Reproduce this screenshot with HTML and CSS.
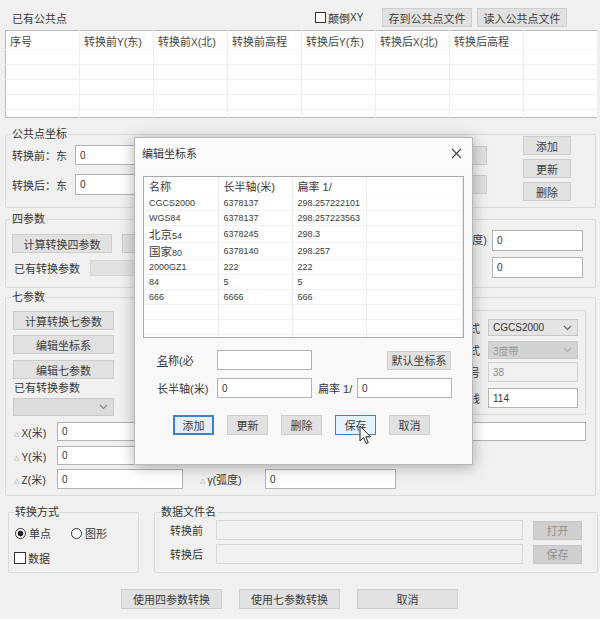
FILE: index.html
```html
<!DOCTYPE html>
<html lang="zh-CN">
<head>
  <meta charset="UTF-8">
  <title>坐标转换</title>
  <link rel="stylesheet" href="styles.css">
</head>
<body>
<div class="window">

  <div class="top-bar">
    <span class="top-title">已有公共点</span>
    <label class="check swap"><span class="box"></span>颠倒<span class="lat">XY</span></label>
    <button class="btn file-btn">存到公共点文件</button>
    <button class="btn file-btn">读入公共点文件</button>
  </div>

  <table class="points">
    <colgroup>
      <col class="pcol"><col class="pcol"><col class="pcol"><col class="pcol">
      <col class="pcol"><col class="pcol"><col class="pcol"><col>
    </colgroup>
    <tr class="head">
      <td>序号</td><td>转换前<span class="lat">Y</span>(东)</td><td>转换前<span class="lat">X</span>(北)</td><td>转换前高程</td>
      <td>转换后<span class="lat">Y</span>(东)</td><td>转换后<span class="lat">X</span>(北)</td><td>转换后高程</td><td></td>
    </tr>
    <tr><td></td><td></td><td></td><td></td><td></td><td></td><td></td><td></td></tr>
    <tr><td></td><td></td><td></td><td></td><td></td><td></td><td></td><td></td></tr>
    <tr><td></td><td></td><td></td><td></td><td></td><td></td><td></td><td></td></tr>
    <tr><td></td><td></td><td></td><td></td><td></td><td></td><td></td><td></td></tr>
    <tr class="tail"><td></td><td></td><td></td><td></td><td></td><td></td><td></td><td></td></tr>
  </table>

  <!-- 公共点坐标 -->
  <div class="group common-group">
    <span class="legend">公共点坐标</span>
    <div class="common-body">
      <div class="coord-rows">
        <div class="coord-row">
          <span class="coord-label">转换前：东</span>
          <input class="field coord-input" value="0">
          <button class="btn side-btn"></button>
        </div>
        <div class="coord-row">
          <span class="coord-label">转换后：东</span>
          <input class="field coord-input" value="0">
          <button class="btn side-btn"></button>
        </div>
      </div>
      <div class="common-btns">
        <button class="btn small-btn">添加</button>
        <button class="btn small-btn">更新</button>
        <button class="btn small-btn">删除</button>
      </div>
    </div>
  </div>

  <!-- 四参数 -->
  <div class="group four-group">
    <span class="legend">四参数</span>
    <div class="four-row">
      <button class="btn calc-btn">计算转换四参数</button>
      <button class="btn calc-btn next"></button>
      <span class="param-label">度)</span>
      <input class="field short-input top" value="0">
    </div>
    <div class="four-row second">
      <span class="have-label">已有转换参数</span>
      <span class="blank-box"></span>
      <input class="field short-input" value="0">
    </div>
  </div>

  <!-- 七参数 -->
  <div class="group seven-group">
    <span class="legend">七参数</span>
    <div class="seven-top">
      <div class="seven-tools">
        <button class="btn tool-btn">计算转换七参数</button>
        <button class="btn tool-btn">编辑坐标系</button>
        <button class="btn tool-btn">编辑七参数</button>
        <div class="tools-label">已有转换参数</div>
        <div class="combo off wide">
          <span></span>
          <svg class="chev" width="9" height="6" viewBox="0 0 9 6"><polyline points="1,1 4.5,4.5 8,1" fill="none" stroke="#888" stroke-width="1.1"/></svg>
        </div>
      </div>
      <div class="proj-box">
        <div class="proj-row h17">
          <span class="proj-label">格式</span>
          <div class="combo">
            <span class="lat">CGCS2000</span>
            <svg class="chev" width="9" height="6" viewBox="0 0 9 6"><polyline points="1,1 4.5,4.5 8,1" fill="none" stroke="#666" stroke-width="1.1"/></svg>
          </div>
        </div>
        <div class="proj-row h18">
          <span class="proj-label">方式</span>
          <div class="combo off">
            <span>3度带</span>
            <svg class="chev" width="9" height="6" viewBox="0 0 9 6"><polyline points="1,1 4.5,4.5 8,1" fill="none" stroke="#aaa" stroke-width="1.1"/></svg>
          </div>
        </div>
        <div class="proj-row h20">
          <span class="proj-label">带号</span>
          <input class="field proj-input off" value="38" readonly>
        </div>
        <div class="proj-row h20 last">
          <span class="proj-label">子午线</span>
          <input class="field proj-input" value="114">
        </div>
      </div>
    </div>

    <div class="param-rows">
      <div class="param-row">
        <span class="delta-label"><span class="tri">△</span><span class="lat">X</span>(米)</span>
        <input class="field param-input" value="0">
        <span class="angle-label"></span>
        <input class="field angle-input" value="">
        <input class="field scale-input" value="">
      </div>
      <div class="param-row">
        <span class="delta-label"><span class="tri">△</span><span class="lat">Y</span>(米)</span>
        <input class="field param-input" value="0">
        <span class="angle-label"><span class="tri">△</span><span class="lat">β</span>(弧度)</span>
        <input class="field angle-input" value="0">
      </div>
      <div class="param-row tall">
        <span class="delta-label"><span class="tri">△</span><span class="lat">Z</span>(米)</span>
        <input class="field param-input" value="0">
        <span class="angle-label"><span class="tri">△</span><span class="lat">γ</span>(弧度)</span>
        <input class="field angle-input" value="0">
      </div>
    </div>
  </div>

  <div class="bottom-groups">
    <div class="group mode-group">
      <span class="legend">转换方式</span>
      <div class="radio-row">
        <label class="radio"><span class="dot on"></span>单点</label>
        <label class="radio second"><span class="dot"></span>图形</label>
      </div>
      <div class="check-row">
        <label class="check"><span class="box"></span>数据</label>
      </div>
    </div>

    <div class="group file-group">
      <span class="legend">数据文件名</span>
      <div class="file-row">
        <span class="file-label">转换前</span>
        <span class="file-box"></span>
        <button class="btn file-act" disabled>打开</button>
      </div>
      <div class="file-row next">
        <span class="file-label">转换后</span>
        <span class="file-box"></span>
        <button class="btn file-act" disabled>保存</button>
      </div>
    </div>
  </div>

  <div class="actions">
    <button class="btn action-btn">使用四参数转换</button>
    <button class="btn action-btn">使用七参数转换</button>
    <button class="btn action-btn">取消</button>
  </div>

  <!-- 编辑坐标系 dialog -->
  <div class="dialog">
    <div class="dialog-title">
      <span>编辑坐标系</span>
      <svg class="close" width="11" height="11" viewBox="0 0 11 11"><path d="M1 1 L10 10 M10 1 L1 10" stroke="#444" stroke-width="1.1"/></svg>
    </div>

    <div class="ellipsoid-list">
      <table class="ellipsoids">
        <colgroup><col class="ecol"><col class="ecol"><col class="ecol"><col></colgroup>
        <tr class="head"><td>名称</td><td>长半轴(米)</td><td>扁率 1/</td><td></td></tr>
        <tr><td>CGCS2000</td><td>6378137</td><td>298.257222101</td><td></td></tr>
        <tr><td>WGS84</td><td>6378137</td><td>298.257223563</td><td></td></tr>
        <tr><td><span class="cjk">北京</span>54</td><td>6378245</td><td>298.3</td><td></td></tr>
        <tr><td><span class="cjk">国家</span>80</td><td>6378140</td><td>298.257</td><td></td></tr>
        <tr><td>2000GZ1</td><td>222</td><td>222</td><td></td></tr>
        <tr><td>84</td><td>5</td><td>5</td><td></td></tr>
        <tr><td>666</td><td>6666</td><td>666</td><td></td></tr>
        <tr><td></td><td></td><td></td><td></td></tr>
        <tr><td></td><td></td><td></td><td></td></tr>
        <tr><td></td><td></td><td></td><td></td></tr>
      </table>
    </div>

    <div class="dlg-row first">
      <span class="dlg-label"><u>名</u>称(必</span>
      <input class="field dlg-input" value="">
      <button class="btn default-btn">默认坐标系</button>
    </div>
    <div class="dlg-row">
      <span class="dlg-label">长半轴(米)</span>
      <input class="field dlg-input" value="0">
      <span class="flat-label">扁率 1/</span>
      <input class="field dlg-input" value="0">
    </div>
    <div class="dlg-btns">
      <button class="btn dlg-btn focus">添加</button>
      <button class="btn dlg-btn">更新</button>
      <button class="btn dlg-btn">删除</button>
      <button class="btn dlg-btn hover">保存</button>
      <button class="btn dlg-btn">取消</button>
    </div>
  </div>

  <svg class="cursor" width="13" height="20" viewBox="0 0 13 20">
    <path d="M1 1 L1 16 L4.5 12.5 L7 18.5 L9.2 17.6 L6.8 11.8 L11.5 11.8 Z" fill="#fff" stroke="#222" stroke-width="1" stroke-linejoin="round"/>
  </svg>
</div>
</body>
</html>
```

FILE: styles.css
```css
* {
  box-sizing: border-box;
}

html, body {
  margin: 0;
  padding: 0;
}

body {
  width: 600px;
  height: 619px;
  overflow: hidden;
  background: #f0f0f0;
  font-family: "Liberation Sans", "Noto Sans CJK SC", sans-serif;
  font-size: 11px;
  color: #363636;
}

.window {
  position: relative;
  height: 617px;
  border-bottom: 2px solid #5c5c5c;
}

.lat {
  font-size: 10px;
}

/* buttons and fields */
.btn {
  font: inherit;
  color: #3c3c3c;
  background: #e1e1e1;
  border: 1px solid #cdcdcd;
  padding: 0;
  height: 19px;
  display: flex;
  align-items: center;
  justify-content: center;
}

.btn[disabled] {
  background: #cfcfcf;
  border-color: #c6c6c6;
  color: #8f8f8f;
}

.field {
  font-family: "Liberation Sans", sans-serif;
  font-size: 10px;
  color: #333;
  background: #fff;
  border: 1px solid #b3b3b3;
  padding: 0 0 0 4px;
  margin: 0;
  height: 20px;
  outline: none;
}

.field.off {
  background: #f0f0f0;
  border-color: #d2d2d2;
  color: #8a8a8a;
}

.check {
  display: flex;
  align-items: center;
}

.check .box {
  width: 12px;
  height: 12px;
  border: 1px solid #333;
  background: #fff;
  margin-right: 2px;
}

/* top list */
.top-bar {
  display: flex;
  align-items: center;
  height: 19px;
  margin-top: 8px;
  padding-left: 12px;
}

.top-title {
  width: 303px;
}

.check.swap {
  width: 67px;
}

.check.swap .box {
  width: 11px;
  height: 11px;
}

.file-btn {
  width: 90px;
}

.file-btn + .file-btn {
  margin-left: 5px;
}

.points {
  margin: 3px 0 0 5px;
  width: 593px;
  height: 86px;
  border-collapse: collapse;
  table-layout: fixed;
  background: #fff;
  border: 1px solid #b9b9b9;
}

.points .pcol {
  width: 74px;
}

.points td {
  border-right: 1px solid #ececec;
  border-bottom: 1px solid #efefef;
  height: 15px;
  padding: 0 0 0 4px;
  white-space: nowrap;
  overflow: hidden;
}

.points tr.head td {
  height: 17px;
  padding-top: 2px;
  vertical-align: top;
  border-bottom-color: #f6f6f6;
  color: #444;
}

.points tr.tail td {
  height: 8px;
  border-bottom: none;
}

/* group boxes */
.group {
  position: relative;
  border: 1px solid #dadada;
  border-radius: 2px;
  margin-left: 5px;
  width: 591px;
}

.legend {
  position: absolute;
  top: -9px;
  left: 5px;
  padding: 0 1px;
  line-height: 16px;
  background: #f0f0f0;
  color: #333;
}

/* 公共点坐标 */
.common-group {
  margin-top: 16px;
  height: 74px;
}

.common-body {
  display: flex;
}

.coord-rows {
  flex: 1;
  padding-top: 10px;
}

.coord-row {
  display: flex;
  align-items: center;
  height: 20px;
}

.coord-row + .coord-row {
  margin-top: 9px;
  height: 21px;
}

.coord-label {
  width: 69px;
  padding-left: 6px;
}

.coord-input {
  width: 355px;
  height: 100%;
}

.side-btn {
  width: 50px;
  margin-left: 7px;
}

.common-btns {
  display: flex;
  flex-direction: column;
  gap: 4px;
  width: 48px;
  margin: 1px 24px 0 0;
}

/* 四参数 */
.four-group {
  margin-top: 11px;
  height: 69px;
}

.four-row {
  display: flex;
  height: 23px;
  margin-top: 10px;
}

.calc-btn {
  width: 100px;
  align-self: flex-end;
  margin-left: 6px;
}

.calc-btn.next {
  margin-left: 10px;
}

.param-label {
  margin-left: auto;
  margin-right: 5px;
  line-height: 21px;
}

.short-input {
  width: 91px;
  height: 21px;
  margin-right: 12px;
}

.short-input.top {
  align-self: flex-start;
}

.four-row.second {
  margin-top: 4px;
  height: 21px;
  align-items: center;
}

.four-row.second .short-input {
  margin-left: auto;
}

.have-label {
  width: 76px;
  margin-left: 8px;
}

.blank-box {
  width: 200px;
  height: 16px;
  background: #e2e2e2;
  border: 1px solid #d6d6d6;
}

/* 七参数 */
.seven-group {
  margin-top: 9px;
  height: 199px;
}

.seven-top {
  display: flex;
  height: 106px;
  margin-top: 12px;
}

.seven-tools {
  display: flex;
  flex-direction: column;
  width: 101px;
  margin-left: 7px;
  padding-top: 1px;
}

.tool-btn + .tool-btn {
  margin-top: 5px;
}

.tool-btn + .tool-btn + .tool-btn {
  margin-top: 6px;
}

.tools-label {
  height: 17px;
  line-height: 17px;
  margin: 1px 0 0 1px;
}

.combo {
  display: flex;
  align-items: center;
  justify-content: space-between;
  width: 90px;
  height: 100%;
  padding: 0 5px 0 4px;
  background: #e4e4e4;
  border: 1px solid #c6c6c6;
  color: #333;
  font-size: 10px;
}

.combo.off {
  background: #d3d3d3;
  border-color: #cacaca;
  color: #9a9a9a;
}

.combo.wide {
  width: 101px;
  height: 18px;
  margin-top: 1px;
  background: #dcdcdc;
}

.proj-box {
  display: flex;
  flex-direction: column;
  align-items: flex-end;
  width: 286px;
  height: 105px;
  margin: 0 9px 0 auto;
  padding: 8px 7px 0 0;
  border: 1px solid #dadada;
}

.proj-row {
  display: flex;
  align-items: center;
}

.proj-row.h17 { height: 17px; }
.proj-row.h18 { height: 18px; margin-top: 5px; }
.proj-row.h20 { height: 20px; margin-top: 3px; }
.proj-row.last { margin-top: 6px; }

.proj-label {
  margin-right: 8px;
}

.proj-input {
  width: 90px;
  height: 100%;
}

.param-rows {
  margin-top: 6px;
}

.param-row {
  display: flex;
  align-items: center;
  height: 19px;
}

.param-row + .param-row {
  margin-top: 5px;
}

.param-row.tall {
  margin-top: 4px;
  height: 20px;
}

.tri {
  font-family: "DejaVu Sans", sans-serif;
  font-size: 7px;
  color: #999;
  margin-right: 2px;
  vertical-align: 1px;
}

.delta-label {
  width: 51px;
  padding-left: 8px;
}

.param-input {
  width: 126px;
  height: 100%;
}

.angle-label {
  width: 82px;
  padding-left: 17px;
}

.angle-input {
  width: 131px;
  height: 100%;
}

.scale-input {
  width: 176px;
  height: 100%;
  margin-left: 14px;
}

/* bottom groups */
.bottom-groups {
  display: flex;
  height: 61px;
  margin-top: 16px;
}

.mode-group {
  width: 131px;
  height: 61px;
  margin-left: 8px;
}

.radio-row {
  display: flex;
  align-items: center;
  height: 16px;
  margin-top: 12px;
  padding-left: 6px;
}

.radio {
  display: flex;
  align-items: center;
  gap: 3px;
}

.radio.second {
  margin-left: 20px;
}

.dot {
  width: 11px;
  height: 11px;
  border: 1px solid #333;
  border-radius: 50%;
  background: #fff;
}

.dot.on {
  background: radial-gradient(circle, #222 0 2.6px, #fff 3.2px);
}

.check-row {
  display: flex;
  align-items: center;
  height: 16px;
  margin-top: 9px;
  padding-left: 5px;
}

.file-group {
  width: 444px;
  height: 61px;
  margin-left: 15px;
}

.file-row {
  display: flex;
  align-items: center;
  height: 20px;
  margin-top: 7px;
}

.file-row.next {
  margin-top: 4px;
}

.file-label {
  width: 61px;
  padding-left: 15px;
}

.file-box {
  width: 307px;
  height: 20px;
  background: #f0f0f0;
  border: 1px solid #d6d6d6;
}

.file-act {
  width: 49px;
  margin-left: 10px;
}

/* bottom actions */
.actions {
  display: flex;
  gap: 17px;
  margin-top: 16px;
  padding-left: 121px;
}

.action-btn {
  width: 101px;
  height: 20px;
}

/* dialog */
.dialog {
  position: absolute;
  left: 134px;
  top: 129px;
  width: 339px;
  height: 328px;
  background: #f8f8f8;
  border: 1px solid #b8b8b8;
  box-shadow: 0 2px 14px rgba(0, 0, 0, 0.3);
}

.dialog-title {
  display: flex;
  align-items: center;
  justify-content: space-between;
  height: 30px;
  padding: 0 10px 0 7px;
  background: #fcfcfc;
  color: #333;
}

.ellipsoid-list {
  width: 321px;
  height: 162px;
  margin: 8px 0 0 8px;
  background: #fff;
  border: 1px solid #a9a9a9;
  overflow: hidden;
}

.ellipsoids {
  width: 100%;
  border-collapse: collapse;
  table-layout: fixed;
  font-size: 9px;
  color: #3a3a3a;
}

.ellipsoids .ecol {
  width: 74px;
}

.ellipsoids td {
  height: 15px;
  padding: 0 0 0 5px;
  border-right: 1px solid #ececec;
  border-bottom: 1px solid #f0f0f0;
  white-space: nowrap;
  overflow: hidden;
}

.ellipsoids tr.head td {
  height: 18px;
  font-size: 11px;
  border-bottom-color: #f7f7f7;
}

.ellipsoids .cjk {
  font-size: 11.5px;
}

.dlg-row {
  display: flex;
  align-items: center;
  height: 20px;
  margin-top: 8px;
  padding-left: 22px;
}

.dlg-row.first {
  margin-top: 12px;
}

.dlg-label {
  width: 60px;
}

.dlg-label u {
  text-decoration-thickness: 1px;
}

.dlg-input {
  width: 95px;
  height: 100%;
}

.default-btn {
  width: 64px;
  margin: 0 21px 0 auto;
}

.flat-label {
  width: 39px;
  margin-left: 6px;
}

.dlg-btns {
  display: flex;
  gap: 13px;
  margin-top: 17px;
  padding-left: 38px;
}

.dlg-btn {
  width: 41px;
  height: 20px;
}

.dlg-btn.focus {
  background: #e3eef9;
  border: 2px solid #3d84c6;
}

.dlg-btn.hover {
  background: #e5f1fb;
  border-color: #3d84c6;
}

.cursor {
  position: absolute;
  left: 359px;
  top: 417px;
}
```
